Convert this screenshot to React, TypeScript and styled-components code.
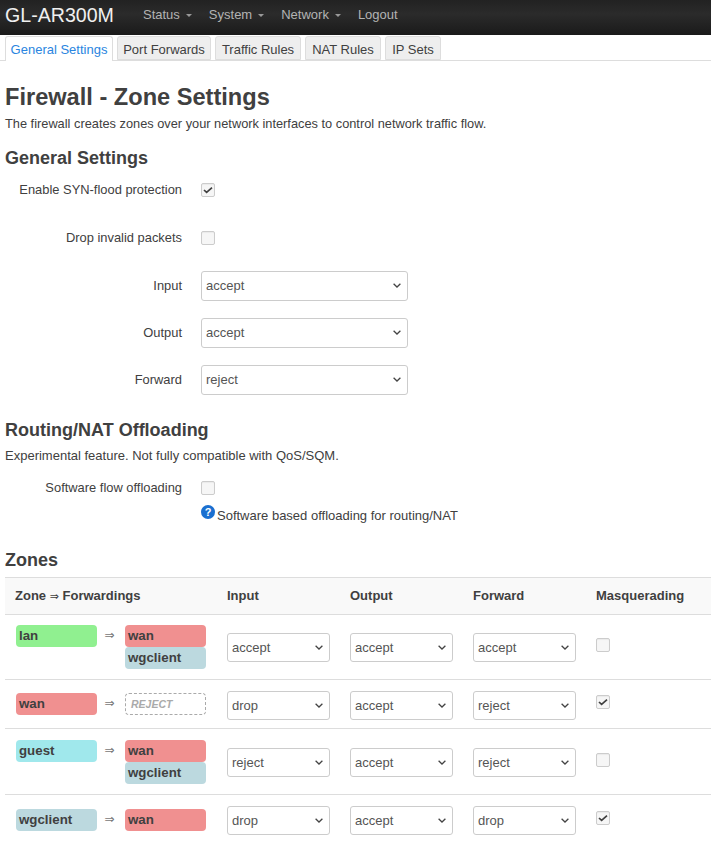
import React from "react";
import styled, { createGlobalStyle } from "styled-components";

const Global = createGlobalStyle`
  html, body { margin: 0; padding: 0; background: #fff; }
  body {
    font-family: "Liberation Sans", Arial, sans-serif;
    font-size: 13px;
    line-height: 18px;
    color: #404040;
    overflow: hidden;
  }
`;

const Page = styled.div`
  width: 711px;
  height: 856px;
  overflow: hidden;
`;

const NavBar = styled.header`
  height: 35px;
  box-sizing: border-box;
  background: linear-gradient(#222222, #2b2b2b 40%, #1a1a1a);
  display: flex;
  align-items: center;
  padding: 0 0 5px 5px;
`;

const Brand = styled.div`
  font-size: 19.6px;
  color: #f0f0f0;
  width: 129.5px;
`;

const NavLink = styled.div`
  color: #b3b3b3;
  font-size: 13px;
  margin: 0 8.5px;
  display: flex;
  align-items: center;
  gap: 6px;
`;

const Caret = styled.span`
  width: 0;
  height: 0;
  border-left: 3px solid transparent;
  border-right: 3px solid transparent;
  border-top: 3px solid #999;
`;

const Tabs = styled.nav`
  display: flex;
  gap: 4px;
  padding: 1px 5px 0;
  height: 24px;
  border-bottom: 1px solid #ddd;
`;

const Tab = styled.div<{ $active?: boolean; $w: number }>`
  width: ${(p) => p.$w}px;
  height: ${(p) => (p.$active ? "25px" : "24px")};
  box-sizing: border-box;
  text-align: center;
  line-height: 25px;
  border: 1px solid #ddd;
  border-bottom: ${(p) => (p.$active ? "none" : "1px solid #ddd")};
  border-radius: 3px 3px 0 0;
  background: ${(p) => (p.$active ? "#fff" : "#eeeeee")};
  color: ${(p) => (p.$active ? "#2a85e0" : "#404040")};
`;

const Main = styled.main`
  padding: 0 0 0 5px;
`;

const Title = styled.h2`
  margin: 21px 0 0;
  font-size: 23.6px;
  line-height: 30px;
  font-weight: bold;
`;

const Lead = styled.p<{ $fs: number; $top: number }>`
  margin: ${(p) => p.$top}px 0 0;
  font-size: ${(p) => p.$fs}px;
`;

const SectionTitle = styled.h3<{ $top: number }>`
  margin: ${(p) => p.$top}px 0 0;
  font-size: 18px;
  line-height: 16px;
  font-weight: bold;
`;

const Fields = styled.div`
  display: flex;
  flex-direction: column;
`;

const Field = styled.div<{ $h: number; $top?: number }>`
  display: grid;
  grid-template-columns: 177px 207px;
  column-gap: 19px;
  align-items: center;
  height: ${(p) => p.$h}px;
  margin-top: ${(p) => p.$top ?? 0}px;
`;

const FieldLabel = styled.label`
  text-align: right;
  font-size: 12.9px;
`;

const chevron =
  "data:image/svg+xml,%3Csvg xmlns='http://www.w3.org/2000/svg' width='8' height='5' viewBox='0 0 8 5'%3E%3Cpath d='M.6.8 4 4 7.4.8' fill='none' stroke='%23444' stroke-width='1.3'/%3E%3C/svg%3E";

const Select = styled.select<{ $w: number; $h: number }>`
  appearance: none;
  width: ${(p) => p.$w}px;
  height: ${(p) => p.$h}px;
  box-sizing: border-box;
  border: 1px solid #ccc;
  border-radius: 3px;
  background: #fff url("${chevron}") no-repeat right 6px center;
  color: #555;
  font-family: "Liberation Sans", Arial, sans-serif;
  font-size: 13px;
  padding: 0 16px 0 4px;
  display: block;
`;

const CheckBox = styled.span`
  display: block;
  width: 12px;
  height: 12px;
  border: 1px solid #ccc;
  border-radius: 2px;
  background: #f6f6f6;
  box-shadow: inset 0 1px 1px rgba(0, 0, 0, 0.05);
`;

const Help = styled.div`
  display: flex;
  align-items: flex-start;
  gap: 2px;
  margin-left: 196px;
  font-size: 13px;
`;

const HelpText = styled.span`
  margin-top: 2px;
`;

const ZoneTable = styled.table`
  width: 706px;
  border-collapse: collapse;
  table-layout: fixed;
  margin-top: 9px;
  th {
    height: 36px;
    padding: 0 0 0 10px;
    text-align: left;
    font-size: 13px;
    background: #f9f9f9;
    border-top: 1px solid #ddd;
    border-bottom: 1px solid #ddd;
  }
  td {
    padding: 0;
    vertical-align: middle;
    border-bottom: 1px solid #ddd;
  }
  tr:last-child td { border-bottom: none; }
`;

const HeadArrow = styled.span`
  font-weight: normal;
  font-family: "DejaVu Sans", sans-serif;
  font-size: 11px;
`;

const ZoneCell = styled.div`
  display: flex;
  align-items: flex-start;
  padding-left: 11px;
`;

const Arrow = styled.span`
  width: 28px;
  box-sizing: border-box;
  padding-right: 3px;
  text-align: center;
  color: #777;
  line-height: 20px;
  font-size: 12px;
  font-family: "DejaVu Sans", sans-serif;
`;

const Badges = styled.div`
  display: flex;
  flex-direction: column;
`;

const Badge = styled.div<{ $bg: string }>`
  width: 81px;
  height: 22px;
  box-sizing: border-box;
  padding-left: 3px;
  line-height: 22px;
  background: ${(p) => p.$bg};
  font-size: 13.3px;
  font-weight: bold;
  border-radius: 4px;
`;

const Reject = styled.div`
  width: 81px;
  height: 22px;
  box-sizing: border-box;
  padding-left: 5px;
  line-height: 20px;
  border: 1px dashed #aaa;
  border-radius: 4px;
  color: #aaa;
  font-size: 10.5px;
  font-weight: bold;
  font-style: italic;
`;

const SelectCell = styled.div<{ $low: boolean }>`
  padding: ${(p) => (p.$low ? "2px" : "0")} 0 0 10px;
`;

const MasqCell = styled.div`
  padding: 0 0 4px 10px;
`;

const colors: Record<string, string> = {
  lan: "#90f090",
  wan: "#f09090",
  guest: "#a0e8ec",
  wgclient: "#bcd9df",
};

const Check = ({ on }: { on?: boolean }) => (
  <CheckBox>
    {on && (
      <svg width="12" height="12" viewBox="0 0 12 12" style={{ display: "block" }}>
        <path d="M2 6 L4.6 8.4 L10 3.6" fill="none" stroke="#404040" strokeWidth="1.7" />
      </svg>
    )}
  </CheckBox>
);

const Drop = ({ value, w = 207, h = 30 }: { value: string; w?: number; h?: number }) => (
  <Select $w={w} $h={h} defaultValue={value}>
    <option value="accept">accept</option>
    <option value="drop">drop</option>
    <option value="reject">reject</option>
  </Select>
);

const rows = [
  { zone: "lan", to: ["wan", "wgclient"], input: "accept", output: "accept", forward: "accept", masq: false, h: 65 },
  { zone: "wan", to: [], input: "drop", output: "accept", forward: "reject", masq: true, h: 49 },
  { zone: "guest", to: ["wan", "wgclient"], input: "reject", output: "accept", forward: "reject", masq: false, h: 66 },
  { zone: "wgclient", to: ["wan"], input: "drop", output: "accept", forward: "drop", masq: true, h: 50 },
];

export default function App() {
  return (
    <Page>
      <Global />
      <NavBar>
        <Brand>GL-AR300M</Brand>
        <NavLink>Status <Caret /></NavLink>
        <NavLink>System <Caret /></NavLink>
        <NavLink>Network <Caret /></NavLink>
        <NavLink>Logout</NavLink>
      </NavBar>
      <Tabs>
        <Tab $active $w={108}>General Settings</Tab>
        <Tab $w={94}>Port Forwards</Tab>
        <Tab $w={86}>Traffic Rules</Tab>
        <Tab $w={76}>NAT Rules</Tab>
        <Tab $w={56}>IP Sets</Tab>
      </Tabs>
      <Main>
        <Title>Firewall - Zone Settings</Title>
        <Lead $fs={12.8} $top={3}>The firewall creates zones over your network interfaces to control network traffic flow.</Lead>
        <SectionTitle $top={17}>General Settings</SectionTitle>
        <Fields>
          <Field $h={48}>
            <FieldLabel>Enable SYN-flood protection</FieldLabel>
            <Check on />
          </Field>
          <Field $h={48}>
            <FieldLabel>Drop invalid packets</FieldLabel>
            <Check />
          </Field>
          <Field $h={47}>
            <FieldLabel>Input</FieldLabel>
            <Drop value="accept" />
          </Field>
          <Field $h={47}>
            <FieldLabel>Output</FieldLabel>
            <Drop value="accept" />
          </Field>
          <Field $h={47}>
            <FieldLabel>Forward</FieldLabel>
            <Drop value="reject" />
          </Field>
        </Fields>
        <SectionTitle $top={19}>Routing/NAT Offloading</SectionTitle>
        <Lead $fs={13} $top={9}>Experimental feature. Not fully compatible with QoS/SQM.</Lead>
        <Field $h={34} $top={6}>
          <FieldLabel>Software flow offloading</FieldLabel>
          <Check />
        </Field>
        <Help>
          <svg width="14" height="14" viewBox="0 0 14 14">
            <circle cx="7" cy="7" r="7" fill="#1a6fd0" />
            <text x="7" y="11" textAnchor="middle" fontSize="11" fontWeight="bold" fill="#fff" fontFamily="Liberation Sans">?</text>
          </svg>
          <HelpText>Software based offloading for routing/NAT</HelpText>
        </Help>
        <SectionTitle $top={27}>Zones</SectionTitle>
        <ZoneTable>
          <colgroup>
            <col style={{ width: 212 }} />
            <col style={{ width: 123 }} />
            <col style={{ width: 123 }} />
            <col style={{ width: 123 }} />
            <col />
          </colgroup>
          <thead>
            <tr>
              <th>Zone <HeadArrow>⇒</HeadArrow> Forwardings</th>
              <th>Input</th>
              <th>Output</th>
              <th>Forward</th>
              <th>Masquerading</th>
            </tr>
          </thead>
          <tbody>
            {rows.map((r) => (
              <tr key={r.zone} style={{ height: r.h }}>
                <td>
                  <ZoneCell>
                    <Badge $bg={colors[r.zone]}>{r.zone}</Badge>
                    <Arrow>⇒</Arrow>
                    <Badges>
                      {r.to.length === 0 && <Reject>REJECT</Reject>}
                      {r.to.map((t) => (
                        <Badge key={t} $bg={colors[t]}>{t}</Badge>
                      ))}
                    </Badges>
                  </ZoneCell>
                </td>
                <td><SelectCell $low={r.zone !== "lan"}><Drop value={r.input} w={103} h={29} /></SelectCell></td>
                <td><SelectCell $low={r.zone !== "lan"}><Drop value={r.output} w={103} h={29} /></SelectCell></td>
                <td><SelectCell $low={r.zone !== "lan"}><Drop value={r.forward} w={103} h={29} /></SelectCell></td>
                <td><MasqCell><Check on={r.masq} /></MasqCell></td>
              </tr>
            ))}
          </tbody>
        </ZoneTable>
      </Main>
    </Page>
  );
}
